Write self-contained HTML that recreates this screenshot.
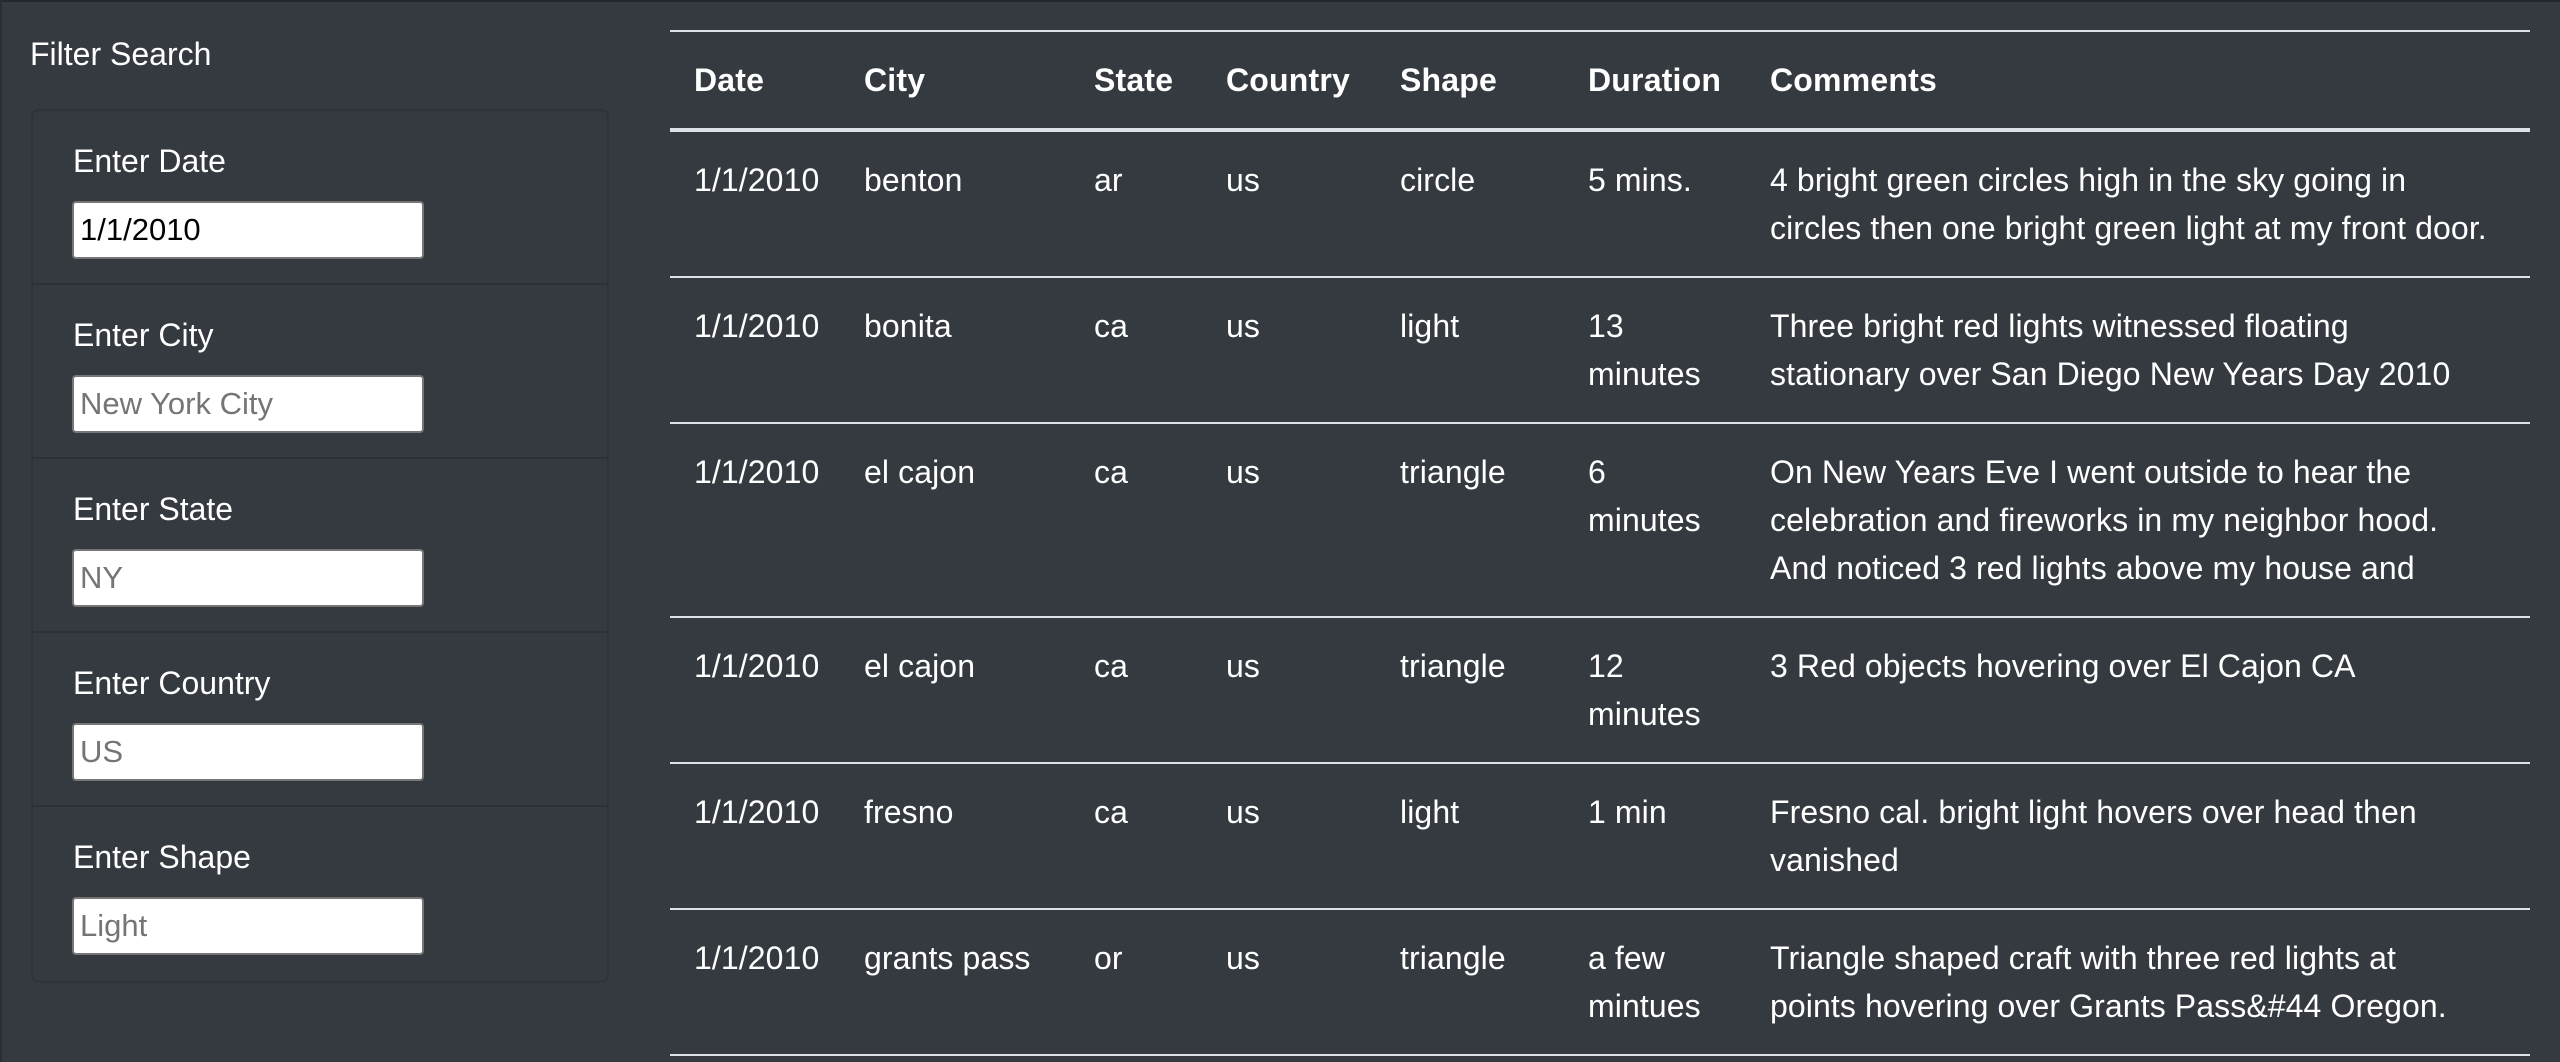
<!DOCTYPE html>
<html><head><meta charset="utf-8">
<style>
html,body{margin:0;padding:0;overflow:hidden;}
body{background:#343a40;}
#wrap{width:1280px;height:531px;zoom:2;background:#343a40;color:#fff;font-family:"Liberation Sans",Arial,sans-serif;font-size:16px;line-height:24px;position:relative;overflow:hidden;}
.topbar{position:absolute;left:0;top:0;width:1280px;height:1px;background:#24282c;}
.leftbar{position:absolute;left:0;top:0;width:1px;height:531px;background:#2a2e33;}
.title{position:absolute;left:15px;top:15px;}
.card{position:absolute;left:15.5px;top:54.5px;width:287px;height:435px;border:1px solid #2e3338;border-radius:4px;}
.sec{height:86px;border-bottom:1px solid #2c3136;position:relative;}
.sec:last-child{border-bottom:none;}
.sec label{position:absolute;left:20px;top:13px;}
.sec .inp{position:absolute;left:19.5px;top:45px;width:171px;height:27px;background:#fff;border:1px solid #767676;border-radius:2px;color:#757575;font-size:15.5px;line-height:27px;padding-left:3px;}
.sec .inp.val{color:#000;}
table{position:absolute;left:335px;top:15px;width:930px;border-collapse:collapse;table-layout:fixed;}
th,td{padding:12px;text-align:left;vertical-align:top;border-top:1px solid #dee2e6;white-space:nowrap;}
td{letter-spacing:0.05px;}
th{font-weight:bold;border-bottom:2px solid #dee2e6;letter-spacing:0.1px;}
tbody tr:last-child td{border-bottom:1px solid #dee2e6;}
</style></head><body><div id="wrap">
<div class="topbar"></div><div class="leftbar"></div>
<div class="title">Filter Search</div>
<div class="card">
<div class="sec"><label>Enter Date</label><div class="inp val">1/1/2010</div></div>
<div class="sec"><label>Enter City</label><div class="inp">New York City</div></div>
<div class="sec"><label>Enter State</label><div class="inp">NY</div></div>
<div class="sec"><label>Enter Country</label><div class="inp">US</div></div>
<div class="sec"><label>Enter Shape</label><div class="inp">Light</div></div>
</div>
<table>
<colgroup><col style="width:85px"><col style="width:115px"><col style="width:66px"><col style="width:87px"><col style="width:94px"><col style="width:91px"><col style="width:392px"></colgroup>
<thead><tr><th>Date</th><th>City</th><th>State</th><th>Country</th><th>Shape</th><th>Duration</th><th>Comments</th></tr></thead>
<tbody>
<tr><td>1/1/2010</td><td>benton</td><td>ar</td><td>us</td><td>circle</td><td>5 mins.</td><td>4 bright green circles high in the sky going in<br>circles then one bright green light at my front door.</td></tr>
<tr><td>1/1/2010</td><td>bonita</td><td>ca</td><td>us</td><td>light</td><td>13<br>minutes</td><td>Three bright red lights witnessed floating<br>stationary over San Diego New Years Day 2010</td></tr>
<tr><td>1/1/2010</td><td>el cajon</td><td>ca</td><td>us</td><td>triangle</td><td>6<br>minutes</td><td>On New Years Eve I went outside to hear the<br>celebration and fireworks in my neighbor hood.<br>And noticed 3 red lights above my house and</td></tr>
<tr><td>1/1/2010</td><td>el cajon</td><td>ca</td><td>us</td><td>triangle</td><td>12<br>minutes</td><td>3 Red objects hovering over El Cajon CA</td></tr>
<tr><td>1/1/2010</td><td>fresno</td><td>ca</td><td>us</td><td>light</td><td>1 min</td><td>Fresno cal. bright light hovers over head then<br>vanished</td></tr>
<tr><td>1/1/2010</td><td>grants pass</td><td>or</td><td>us</td><td>triangle</td><td>a few<br>mintues</td><td>Triangle shaped craft with three red lights at<br>points hovering over Grants Pass&amp;#44 Oregon.</td></tr>
</tbody></table>
</div></body></html>
